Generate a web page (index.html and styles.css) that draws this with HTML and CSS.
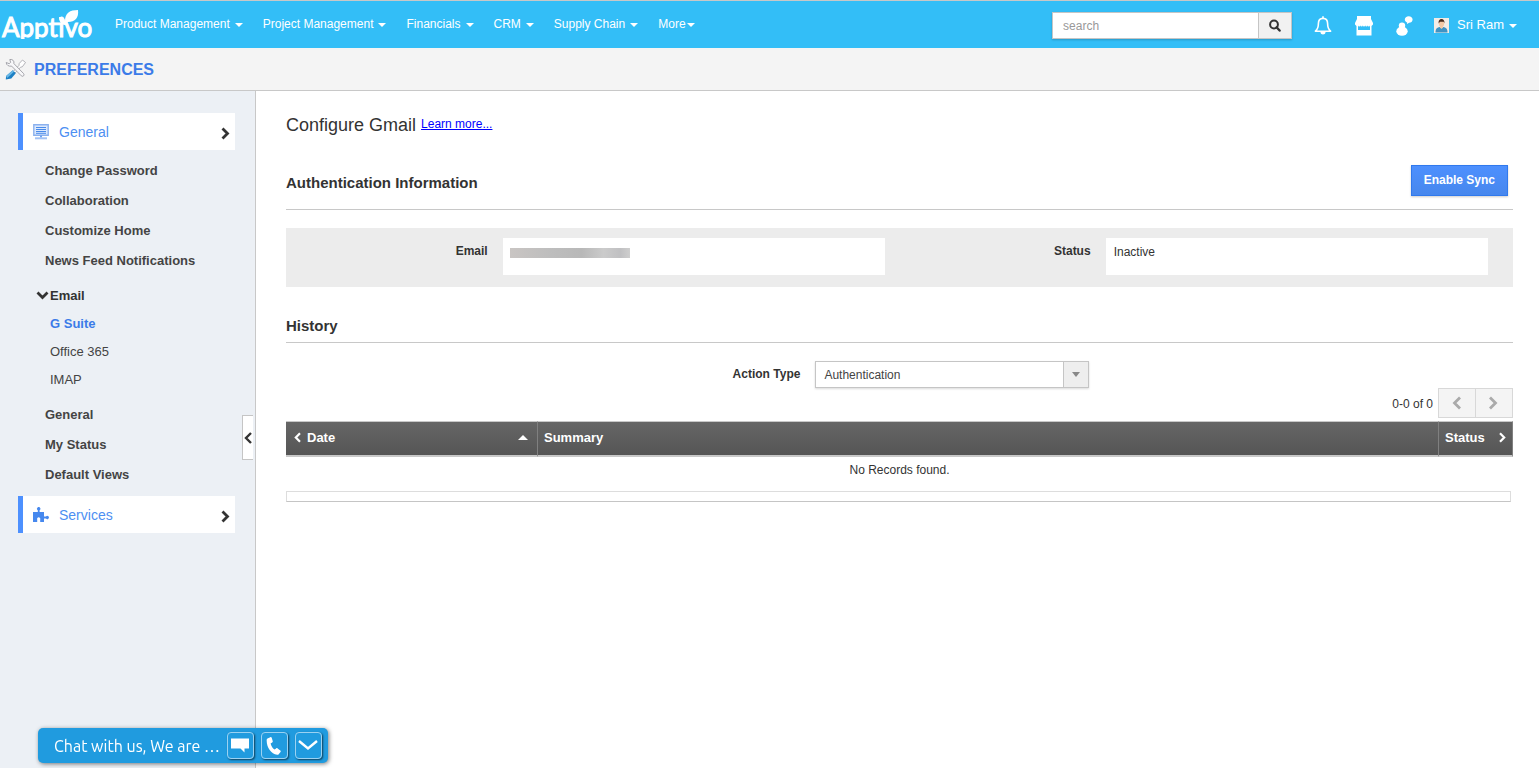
FILE: index.html
```html
<!DOCTYPE html>
<html lang="en">
<head>
<meta charset="utf-8">
<title>Apptivo Preferences</title>
<link rel="stylesheet" href="styles.css">
</head>
<body>
<header class="topbar">
  <a class="logo" href="#" aria-label="Apptivo">
    <svg width="97" height="36" viewBox="0 0 97 36" aria-hidden="true">
      <text class="logo-text" x="2" y="30">Apptivo</text>
      <path d="M0 32h97v4H0z" fill="#33bef7"/>
      <path d="M65 14C65 6 70 3 78 3c1 8-3 12-10 12l-1 3h-2c-4 0-6-4-6-8 4 0 6 1 6 4z" fill="#fff"/>
    </svg>
  </a>
  <nav class="menu">
    <a href="#">Product Management<i class="caret"></i></a>
    <a href="#">Project Management<i class="caret"></i></a>
    <a href="#">Financials<i class="caret"></i></a>
    <a href="#">CRM<i class="caret"></i></a>
    <a href="#">Supply Chain<i class="caret"></i></a>
    <a class="tight" href="#">More<i class="caret"></i></a>
  </nav>
  <form class="search">
    <input type="text" placeholder="search" aria-label="search">
    <button type="button" aria-label="Search">
      <svg width="12" height="13" viewBox="0 0 12 13"><circle cx="5" cy="5.5" r="3.9" fill="none" stroke="#333" stroke-width="2"/><path d="M7.6 8.3l3 3.2" stroke="#333" stroke-width="2.4" stroke-linecap="round"/></svg>
    </button>
  </form>
  <div class="tools">
    <button type="button" aria-label="Notifications"><svg width="18" height="19" viewBox="0 0 18 19"><path d="M9 2.4c3 0 4.600 2 4.600 5.200 0 4 .9 5.900 3 7.600H1.400c2.100-1.700 3-3.600 3-7.600C4.400 4.400 6 2.400 9 2.400z" fill="none" stroke="#fff" stroke-width="1.600" stroke-linejoin="round"/><path d="M8.200.3h1.600v2H8.200zM6.400 16h5.200c-.3 1.800-1.200 2.500-2.600 2.500S6.700 17.800 6.400 16z" fill="#fff"/></svg></button>
    <button type="button" aria-label="App store"><svg width="18" height="20" viewBox="0 0 18 20"><path fill="#fff" d="M2 0h14v3l2 4v1.500L16.500 10v9.500h-15V10L0 8.500V7l2-4z"/><path fill="#33bef7" d="M3 9.200a1.200 1.200 0 0 0 2.400 0 1.200 1.200 0 0 0 2.400 0 1.200 1.200 0 0 0 2.400 0 1.200 1.200 0 0 0 2.400 0 1.200 1.200 0 0 0 2.400 0V14H3z"/></svg></button>
    <button type="button" aria-label="Chat contacts"><svg width="17" height="20" viewBox="0 0 17 20"><circle cx="6" cy="9.600" r="3.200" fill="#fff"/><ellipse cx="6" cy="15.200" rx="5.700" ry="4.600" fill="#fff"/><path fill="#fff" d="M12.700.2c2.200 0 3.900 1.400 3.900 3.300 0 2-1.600 3.300-3.500 3.300-.5 0-1 1.100-2.200 1.100.3-.5.400-1 .2-1.500-1.400-.5-2.300-1.600-2.300-2.900C8.800 1.600 10.500.2 12.700.2z"/></svg></button>
  </div>
  <button type="button" class="user">
    <svg width="15" height="15" viewBox="0 0 15 15"><path fill="#f3ece6" d="M0 0h15v15H0z"/><path d="M1.500 14.500c0-4 1.500-5.500 6-5.500s6 1.500 6 5.500z" fill="#3f93c4"/><path d="M6 8h3v1.500L7.500 11 6 9.500z" fill="#f4c9a6"/><ellipse cx="7.500" cy="5.600" rx="2.600" ry="3.200" fill="#f4c9a6"/><path d="M4.600 5.500C4.300 2.500 5.500 1 7.500 1s3.300 1.500 2.900 4.500L9.700 3.800H6z" fill="#4b2d1e"/></svg>
    <span>Sri Ram</span><i class="caret"></i>
  </button>
</header>

<div class="titlebar">
  <svg width="22" height="22" viewBox="0 0 22 22" aria-hidden="true">
    <path d="M17.500 2l3 2.500-3.200 4.300-1.800.4L10 15l-1.600-1.600 5.600-6 .2-1.900z" fill="#fff" stroke="#a2a2a8" stroke-width=".8"/>
    <path d="M1.200 4.500l3 1.200 1.400-1.300L4.800 1.500C7.500.9 9.500 3 8.900 5.600l9.600 9.900c1.500 1.500-.6 3.900-2.200 2.300L6.600 8.100C4 8.700 1.200 7.200 1.200 4.500z" fill="#f7f7f9" stroke="#929299" stroke-width=".8"/>
    <path d="M7.800 12.200l3 3-4.500 5.300-5.500.9.300-3.500z" fill="#1d80c4"/><path d="M7.800 12.200l1.400 1.400-7 6.300-1.100-2z" fill="#68b7e6"/>
  </svg>
  <h1>PREFERENCES</h1>
</div>

<div class="layout">
  <aside class="sidebar">
    <a class="group" href="#">
      <svg width="16" height="16" viewBox="0 0 16 16"><path d="M.8.800h14.400v10.400H.8z" fill="#dce9fd" stroke="#8bb1ee" stroke-width="1.400"/><path d="M3 3.500h10M3 5.500h10M3 7.500h10M3 9.300h10" stroke="#4a8bea"/><path d="M8 11.500v2" stroke="#6ea2f0" stroke-width="2"/><path d="M2 14.300h12" stroke="#a3c2f4" stroke-width="2"/></svg>
      <span>General</span>
      <svg class="arrow" width="9" height="13" viewBox="0 0 9 13"><path d="M1.500 1.500l5 5-5 5" fill="none" stroke="#333" stroke-width="2.800"/></svg>
    </a>
    <ul class="links">
      <li><a href="#">Change Password</a></li>
      <li><a href="#">Collaboration</a></li>
      <li><a href="#">Customize Home</a></li>
      <li><a href="#">News Feed Notifications</a></li>
      <li class="open">
        <a class="parent" href="#"><svg width="13" height="9" viewBox="0 0 13 9"><path d="M1.500 1.500l5 5 5-5" fill="none" stroke="#333" stroke-width="2.800"/></svg>Email</a>
        <ul class="sublinks">
          <li><a class="current" href="#">G Suite</a></li>
          <li><a href="#">Office 365</a></li>
          <li><a href="#">IMAP</a></li>
        </ul>
      </li>
      <li><a href="#">General</a></li>
      <li><a href="#">My Status</a></li>
      <li><a href="#">Default Views</a></li>
    </ul>
    <a class="group" href="#">
      <svg width="16" height="16" viewBox="0 0 16 16"><path fill="#4688ee" d="M0 5h4.800V3.200a1.700 1.700 0 1 1 1.800 0V5H11v4.500h2a1.600 1.600 0 1 1 0 2h-2V15H7.200v-2.500a1.600 1.600 0 1 0-3 0V15H0z"/></svg>
      <span>Services</span>
      <svg class="arrow" width="9" height="13" viewBox="0 0 9 13"><path d="M1.500 1.500l5 5-5 5" fill="none" stroke="#333" stroke-width="2.800"/></svg>
    </a>
    <button type="button" class="collapse" aria-label="Collapse sidebar"><svg width="8" height="12" viewBox="0 0 8 12"><path d="M7 1L2 6l5 5" fill="none" stroke="#333" stroke-width="2.400"/></svg></button>
  </aside>

  <main class="content">
    <div class="heading"><h2>Configure Gmail</h2><a href="#">Learn more...</a></div>
    <div class="section">
      <h3>Authentication Information</h3>
      <button type="button" class="sync">Enable Sync</button>
    </div>
    <dl class="details">
      <div><dt>Email</dt><dd><span class="redacted" role="img" aria-label="Hidden email address"></span></dd></div>
      <div><dt>Status</dt><dd>Inactive</dd></div>
    </dl>
    <h3 class="history">History</h3>
    <div class="filter">
      <label for="action-type">Action Type</label>
      <div class="select">
        <select id="action-type"><option>Authentication</option></select>
        <span class="drop"></span>
      </div>
    </div>
    <div class="pager">
      <span>0-0 of 0</span>
      <button type="button" aria-label="Previous page"><svg width="10" height="14" viewBox="0 0 10 14"><path d="M8 1.500L2.500 7 8 12.500" fill="none" stroke="#aaa" stroke-width="2.800"/></svg></button>
      <button type="button" aria-label="Next page"><svg width="10" height="14" viewBox="0 0 10 14"><path d="M1 1.500L6.500 7 1 12.500" fill="none" stroke="#aaa" stroke-width="2.800"/></svg></button>
    </div>
    <table class="records">
      <colgroup><col class="c-date"><col><col class="c-status"></colgroup>
      <thead><tr>
        <th><div class="cell"><svg width="7" height="11" viewBox="0 0 7 11"><path d="M6 1.200L1.800 5.500 6 9.800" fill="none" stroke="#fff" stroke-width="2.200"/></svg><span>Date</span><i class="sort"></i></div></th>
        <th>Summary</th>
        <th><div class="cell"><span>Status</span><svg class="end" width="7" height="11" viewBox="0 0 7 11"><path d="M1 1.200l4.200 4.300L1 9.800" fill="none" stroke="#fff" stroke-width="2.200"/></svg></div></th>
      </tr></thead>
      <tbody><tr><td colspan="3">No Records found.</td></tr></tbody>
    </table>
    <div class="tablefoot"></div>
  </main>
</div>

<div class="chat">
  <span>Chat with us, We are …</span>
  <button type="button" aria-label="Message"><svg width="18" height="15" viewBox="0 0 18 15"><path fill="#fff" d="M0 .5h18v10h-4.500V14.500L9.500 10.500H0z"/></svg></button>
  <button type="button" aria-label="Call"><svg width="16" height="18" viewBox="0 0 16 18"><path fill="#fff" d="M1.500 1.500L4.300.2c.7-.3 1.200 0 1.400.6l1 3.200c.2.600 0 1.100-.5 1.400l-1.600 1c.6 2.600 1.900 4.700 4 6.200l1.500-1.200c.5-.4 1-.4 1.500 0l2.700 2c.6.400.6 1 .2 1.500l-1.800 2.300c-.4.500-1 .6-1.600.5C5 16.700.3 10.300.7 2.800c0-.6.300-1 .8-1.300z"/></svg></button>
  <button type="button" aria-label="Minimize"><svg width="20" height="11" viewBox="0 0 20 11"><path d="M1 1l9 7.500L19 1" fill="none" stroke="#fff" stroke-width="2.400"/></svg></button>
</div>
</body>
</html>
```
FILE: styles.css
```css
* { box-sizing: border-box; }
body {
  margin: 0;
  min-height: 100vh;
  display: flex;
  flex-direction: column;
  font: 12px/16px "Liberation Sans", Arial, sans-serif;
  color: #333;
  background: #fff;
}
a { color: inherit; text-decoration: none; }
ul, dl, dd, h1, h2, h3 { margin: 0; padding: 0; }
ul { list-style: none; }
button { font: inherit; color: inherit; border: 0; background: none; padding: 0; cursor: pointer; }
svg { display: block; flex: none; }

.topbar {
  display: flex;
  align-items: center;
  height: 48px;
  border-top: 1px solid #c8c8c8;
  background: #33bef7;
  color: #fff;
}
.logo { margin-right: 18px; }
.logo-text { font: 26px Lato, sans-serif; fill: #fff; stroke: #fff; stroke-width: 1px; }
.menu { display: flex; flex: 1; gap: 20px; padding-bottom: 2px; }
.menu a { display: flex; align-items: center; gap: 5px; }
.menu .tight { gap: 1px; }
.caret {
  border: 4px solid transparent;
  border-top-color: #fff;
  border-bottom: 0;
  margin-top: 2px;
}
.search {
  display: flex;
  width: 240px;
  height: 27px;
  margin-top: 2px;
  border: 1px solid #c5c5c5;
  box-shadow: 0 1px 2px rgba(0, 0, 0, .2);
}
.search input {
  flex: 1;
  min-width: 0;
  border: 0;
  padding: 0 10px;
  font: inherit;
  background: #fff;
  outline: 0;
}
.search input::placeholder { color: #999; }
.search button {
  display: grid;
  place-items: center;
  width: 33px;
  border-left: 1px solid #c5c5c5;
  background: #f1f1f1;
}
.tools { display: flex; align-items: center; gap: 23px; margin: 2px 21px 0 22px; }
.user { display: flex; align-items: center; gap: 8px; margin-right: 22px; font-size: 13px; }
.user svg { margin-top: 2px; }
.user .caret { margin-left: -3px; }

.titlebar {
  display: flex;
  align-items: center;
  gap: 7px;
  height: 43px;
  padding-left: 5px;
  border-bottom: 1px solid #c8c8c8;
  background: #f4f4f4;
}
.titlebar h1 { margin-top: 2px; font-size: 16px; line-height: 20px; color: #3b7be8; }

.layout { display: flex; flex: 1; }
.sidebar {
  position: relative;
  flex: none;
  width: 256px;
  padding: 22px 20px 0 18px;
  border-right: 1px solid #c8c8c8;
  background: #ecf0f5;
}
.group {
  display: flex;
  align-items: center;
  gap: 10px;
  height: 37px;
  padding: 0 5px 0 10px;
  border-left: 5px solid #4d90fe;
  background: #fff;
  font-size: 14px;
  color: #4d8ff2;
}
.group .arrow { margin: 4px 0 0 auto; }
.links { padding: 6px 0 6px 27px; font-size: 13px; font-weight: bold; line-height: 30px; color: #444; }
.links .open { padding: 5px 0 6px; }
.parent { display: flex; align-items: center; gap: 1px; height: 29px; margin-left: -9px; color: #333; }
.sublinks { padding: 0 0 0 5px; font-weight: normal; line-height: 28px; }
.sublinks .current { font-weight: bold; color: #3b7be8; }
.collapse {
  position: absolute;
  top: 324px;
  right: 2px;
  display: grid;
  place-items: center;
  width: 11px;
  height: 45px;
  border: 1px solid #c5c5c5;
  border-right: 0;
  background: #fff;
}

.content { flex: 1; min-width: 0; padding: 24px 26px 0 30px; }
.heading { display: flex; align-items: center; gap: 5px; height: 20px; }
.heading h2 { font-size: 18px; line-height: 20px; font-weight: normal; }
.heading a { padding-bottom: 2px; color: #00f; text-decoration: underline; }
h3 { font-size: 15px; line-height: 20px; }
.section {
  display: flex;
  align-items: center;
  justify-content: space-between;
  height: 60px;
  margin-top: 15px;
  padding-right: 5px;
  border-bottom: 1px solid #c8c8c8;
}
.section h3 { margin-top: 6px; }
.sync {
  height: 31px;
  margin-top: 2px;
  padding: 0 12px 2px;
  border: 1px solid #3079ed;
  background: linear-gradient(#4d90fe, #4787ed);
  box-shadow: 0 1px 2px rgba(0, 0, 0, .2);
  font-weight: bold;
  color: #fff;
}
.details {
  display: grid;
  grid-template-columns: 1fr 1fr;
  gap: 4px;
  margin-top: 18px;
  padding: 10px 25px 12px 0;
  background: #ececec;
}
.details div { display: flex; justify-content: flex-end; gap: 15px; }
.details dt { padding-top: 5px; font-weight: bold; }
.details dd { width: calc(64% - 1px); height: 37px; padding: 6px 8px; background: #fff; }
.redacted {
  display: block;
  width: 120px;
  height: 10px;
  margin: 4px 0 0 -1px;
  background: linear-gradient(90deg, #c9c5c3, #bdbdbd 35%, #b8b8b8 60%, #cbcbcb 78%, #c0c0c2 92%, #cecece);
}
.history { margin-top: 29px; padding-bottom: 6px; border-bottom: 1px solid #c8c8c8; }
.filter { display: flex; gap: 15px; justify-content: center; margin: 18px 0 0 23px; }
.filter label { padding-top: 5px; font-weight: bold; }
.select {
  display: flex;
  width: 274px;
  height: 27px;
  border: 1px solid #c5c5c5;
  box-shadow: 0 1px 2px rgba(0, 0, 0, .15);
}
.select select {
  appearance: none;
  flex: 1;
  border: 0;
  padding: 0 8px;
  background: #fff;
  font: inherit;
  color: #444;
}
.drop { display: grid; place-items: center; width: 25px; border-left: 1px solid #c5c5c5; background: #eee; }
.drop::before { content: ""; border: 4px solid transparent; border-top: 5px solid #888; border-bottom: 0; }
.pager { display: flex; justify-content: flex-end; align-items: center; height: 30px; }
.pager span { margin: 2px 5px 0 0; }
.pager button {
  display: grid;
  place-items: center;
  width: 38px;
  height: 30px;
  border: 1px solid #d8d8d8;
  background: #f4f4f4;
}
.pager button + button { margin-left: -1px; }
.records {
  width: 100%;
  margin-top: 3px;
  table-layout: fixed;
  border-spacing: 0;
}
.c-date { width: 252px; }
.c-status { width: 74px; }
.records th {
  height: 36px;
  padding: 0 6px 2px;
  border-top: 1px solid #c8c8c8;
  border-bottom: 2px solid #c8c8c8;
  border-right: 1px solid #808080;
  background: linear-gradient(#666, #555);
  font-size: 13px;
  text-align: left;
  color: #fff;
}
.records th:first-child { padding-left: 8px; }
.cell { display: flex; align-items: center; gap: 6px; }
.cell .end { margin-left: auto; }
.sort { margin-left: auto; margin-right: 3px; border: 5px solid transparent; border-bottom-color: #fff; border-top: 0; }
.records td { height: 28px; padding: 0 0 2px; text-align: center; }
.tablefoot { height: 11px; margin: 6px 2px 0 0; border: 1px solid #ddd; border-bottom-color: #c5c5c5; }

.chat {
  position: fixed;
  left: 38px;
  bottom: 5px;
  display: flex;
  align-items: center;
  gap: 7px;
  height: 35px;
  padding: 0 6px 0 16px;
  border-radius: 5px;
  background: #209bdf;
  box-shadow: 1px 1px 4px rgba(0, 0, 0, .5);
  font: 16px/20px Ubuntu, "Noto Sans", sans-serif;
  color: #fff;
}
.chat button {
  display: grid;
  place-items: center;
  width: 27px;
  height: 27px;
  border: 1px solid #9bd2f2;
  border-radius: 4px;
  box-shadow: 1px 1px 2px rgba(0, 0, 0, .6);
}
```
